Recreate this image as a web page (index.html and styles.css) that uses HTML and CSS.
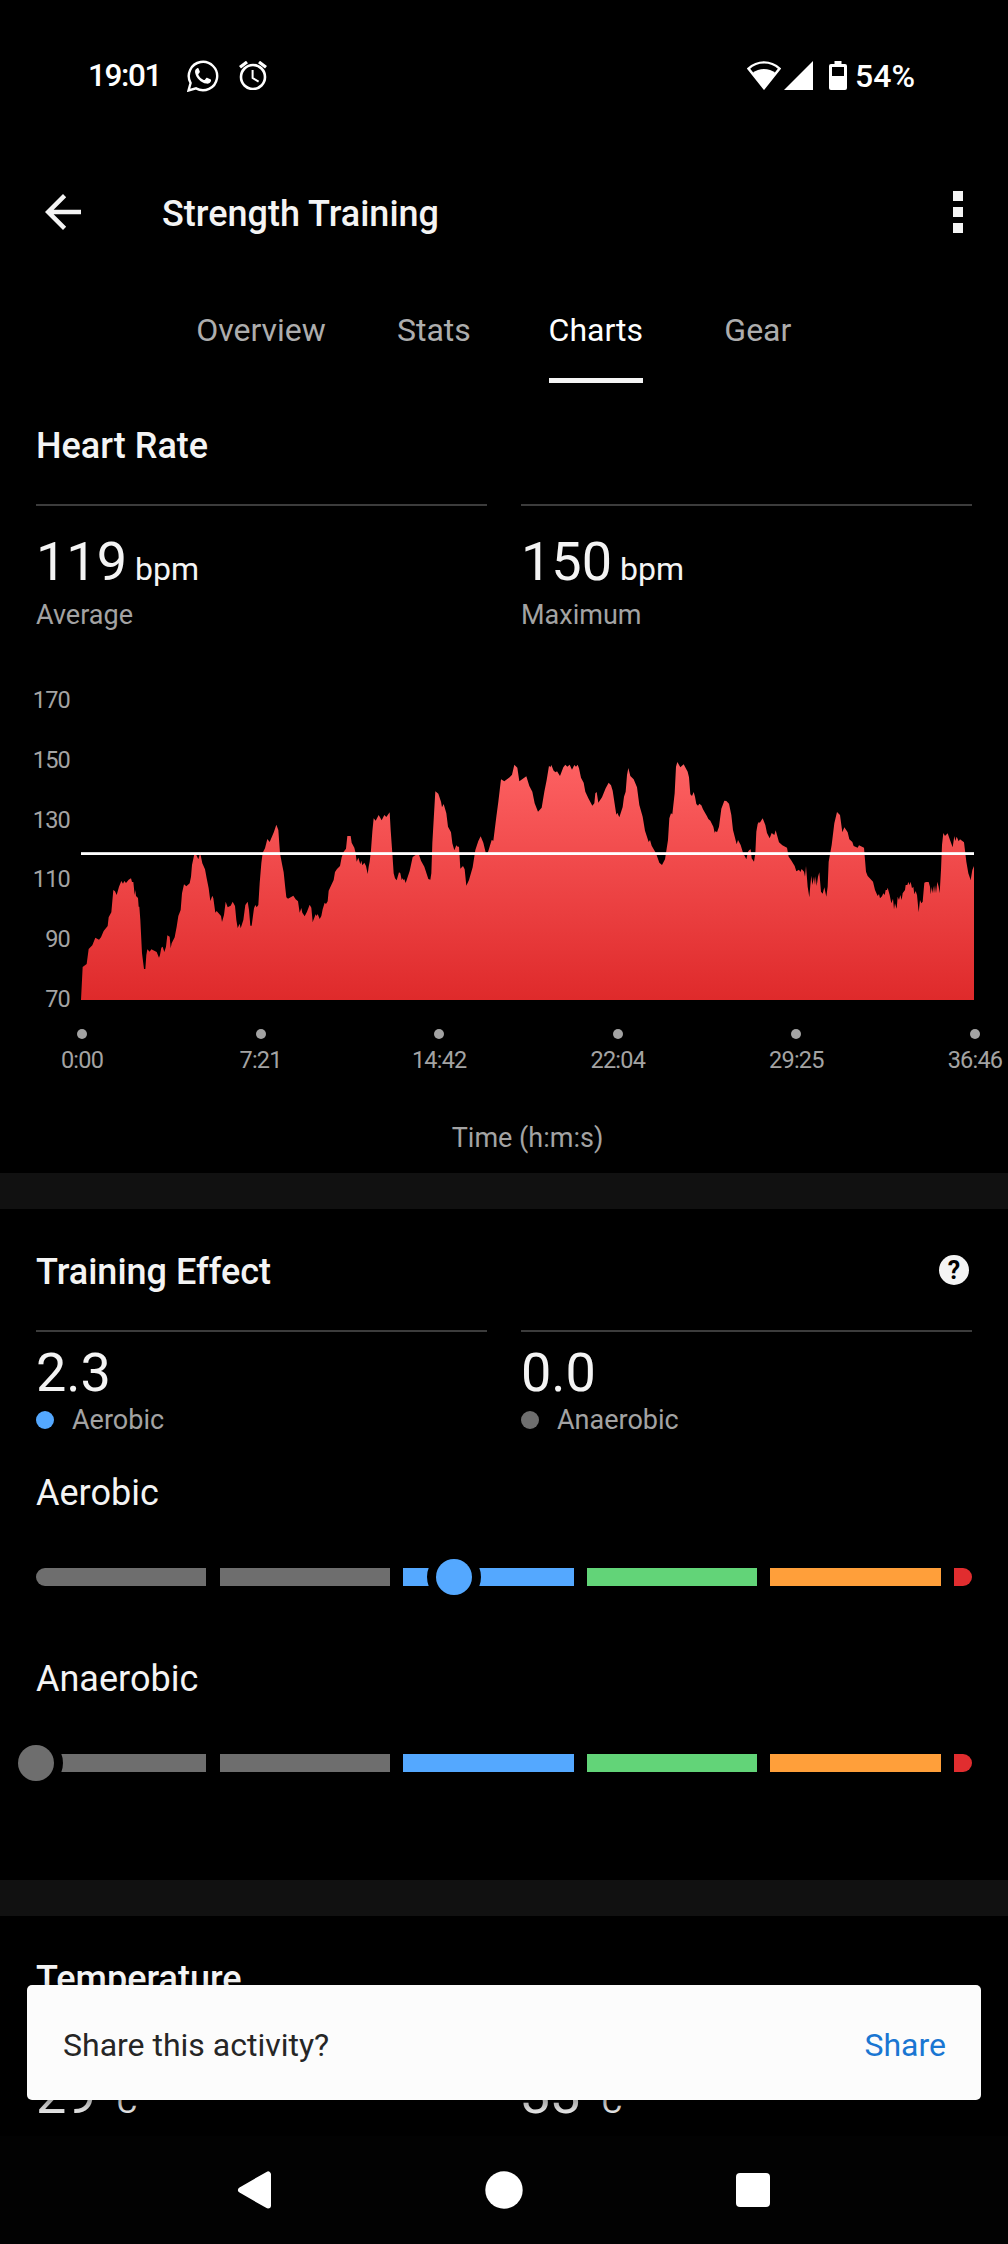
FILE: index.html
```html
<!DOCTYPE html>
<html lang="en">
<head>
  <meta charset="UTF-8">
  <title>Strength Training</title>
  <meta name="theme-color" content="#000000">
  <link rel="stylesheet" href="styles.css">
</head>
<body>

  <!-- status bar -->
  <div class="status">
    <span class="clock">19:01</span>
    <svg class="whatsapp" width="32" height="32" viewBox="0 0 32 32">
      <path d="M1.5 30.5 3.6 23A14.2 14.2 0 1 1 9 28.4z" fill="none" stroke="#fff" stroke-width="2.4"/>
      <path d="M10.2 8.2c-1.5.6-2.4 2.300-2.100 4.200.9 5.400 6 10.300 11.200 11.200 2.300.3 4.200-.8 4.700-2.600.2-.9 0-1.400-.6-1.700l-2.900-1.400c-.6-.3-1-.2-1.400.3l-1.200 1.500c-.3.400-.7.4-1.200.2-2.300-1-4.200-2.800-5.300-5-.2-.4-.1-.8.200-1.100l1-1.300c.3-.4.3-.8.1-1.200l-1.200-2.800c-.3-.5-.8-.5-1.300-.3z" fill="#fff"/>
    </svg>
    <svg class="alarm" width="28" height="29" viewBox="0 0 28 29" fill="none" stroke="#fff">
      <circle cx="14" cy="16" r="12" stroke-width="2.600"/>
      <path d="M1 6.300 8 1M27 6.300 20 1" stroke-width="3.200"/>
      <path d="M13.600 9v8l6 3.600" stroke-width="2"/>
    </svg>
    <span class="spacer"></span>
    <svg class="wifi" width="34" height="29" viewBox="0 0 34 29">
      <path d="M17 1.400C11 1.400 5.700 3.700 1.500 7.600L17 27.200 32.500 7.600C28.300 3.700 23 1.400 17 1.400z" fill="none" stroke="#fff" stroke-width="2.400"/>
      <path d="M5.500 12C12 6.700 22 6.700 28.500 12L17 28z" fill="#fff"/>
    </svg>
    <svg class="signal" width="29" height="29" viewBox="0 0 29 29"><path d="M29 0v29H0z" fill="#fff"/></svg>
    <svg class="battery" width="18" height="29" viewBox="0 0 18 29">
      <path d="M5.500 0h7v3H16a2 2 0 0 1 2 2v22a2 2 0 0 1-2 2H2a2 2 0 0 1-2-2V5a2 2 0 0 1 2-2h3.500zM3 6v9h12V6z" fill="#fff" fill-rule="evenodd"/>
    </svg>
    <span class="percent">54%</span>
  </div>

  <!-- toolbar -->
  <header class="toolbar">
    <svg width="54" height="54" viewBox="0 0 24 24"><path d="M20 11H7.830l5.590-5.590L12 4l-8 8 8 8 1.410-1.410L7.830 13H20z" fill="#f4f4f4"/></svg>
    <h1>Strength Training</h1>
    <div class="more"><i></i><i></i><i></i></div>
  </header>

  <nav class="tabs">
    <a class="tab"><span>Overview</span></a>
    <a class="tab"><span>Stats</span></a>
    <a class="tab active"><span>Charts</span></a>
    <a class="tab"><span>Gear</span></a>
  </nav>

  <!-- heart rate -->
  <section class="heart">
    <h2>Heart Rate</h2>
    <div class="stats">
      <div class="stat">
        <div class="value">119<small> bpm</small></div>
        <div class="label">Average</div>
      </div>
      <div class="stat">
        <div class="value">150<small> bpm</small></div>
        <div class="label">Maximum</div>
      </div>
    </div>

    <div class="chart">
      <div class="y-axis">
        <span>170</span><span>150</span><span>130</span><span>110</span><span>90</span><span>70</span>
      </div>
      <svg class="plot" viewBox="0 60 2679 900" preserveAspectRatio="none">
        <defs>
          <linearGradient id="hr" x1="0" y1="0" x2="0" y2="1">
            <stop offset="0" stop-color="#fd6162"/>
            <stop offset="1" stop-color="#df2a2b"/>
          </linearGradient>
        </defs>
        <path fill="url(#hr)" d="M0 960 L5 861 17 852 23 807 34 796 43 773 54 779 60 772 68 753 80 738 83 712 91 697 97 630 102 634 107 645 114 620 121 603 126 611 130 603 135 609 143 599 150 595 153 606 157 606 161 645 163 630 165 648 171 654 173 680 175 680 178 720 183 820 189 867 193 867 196 825 199 808 206 815 211 808 227 816 234 833 237 825 241 803 245 800 250 816 255 800 259 766 266 770 269 805 272 790 281 772 287 740 292 708 299 690 303 640 309 613 316 619 326 610 330 590 333 555 340 522 346 525 352 538 356 524 359 526 364 550 372 568 377 595 383 625 388 663 394 647 397 655 403 698 407 693 420 708 423 726 429 705 434 665 440 682 449 677 455 665 462 678 466 720 470 744 476 731 479 745 487 720 493 675 500 665 504 690 508 737 512 737 519 685 523 675 527 682 532 675 536 610 541 550 545 518 552 505 559 477 566 486 574 467 579 455 586 434 592 450 594 478 597 520 603 552 608 577 613 625 616 652 621 656 637 647 644 658 651 664 656 698 661 684 664 698 671 709 678 695 686 674 691 683 695 726 704 703 707 708 710 702 716 717 721 708 725 688 731 668 735 672 740 664 743 632 752 613 758 600 762 576 768 567 777 558 782 532 788 515 795 506 799 468 809 468
          812 488 820 503 824 520 827 545 832 533 838 553 841 542 844 556 850 548 855 558 860 582 863 560 866 545 870 510 874 455 878 415 884 422 893 405 902 421 910 405 916 411 926 397 929 450 934 520 938 580 942 595 947 601 954 577 958 580 962 600 965 595 968 601 970 597 974 609 986 573 995 531 1004 525 1014 524 1020 542 1030 560 1042 597 1048 599 1051 580 1054 490 1058 420 1063 334 1072 341 1080 365 1083 382 1088 372 1096 400 1101 440 1110 457 1114 490 1120 511 1126 496 1130 500 1134 500 1138 566 1146 558 1151 568 1156 617 1164 600 1175 562 1183 510 1192 483 1199 469 1207 488 1216 526 1222 513 1232 480 1237 482 1246 410 1252 365 1260 298 1270 304 1286 292 1293 284 1300 254 1309 263 1315 304 1336 289 1345 318 1354 335 1361 370 1371 395 1382 383 1390 335 1397 300 1404 257 1408 262 1411 255 1418 272 1424 277 1428 274 1437 288 1447 262 1453 254 1459 260 1466 254 1473 269 1480 255 1485 260 1490 254 1494 265 1500 293 1508 308 1513 335 1522 355 1534 377 1540 370 1543 340 1547 336 1552 368 1563 352 1574 325 1583 308 1590 316 1595 332 1606 404 1609 398 1615 412 1625 381 1629 350 1634 335 1638 285 1642 264 1648 288 1658 298 1668 322 1675 375 1685 410 1692 452 1703 486 1707 480 1712 497 1725 520 1735 548 1743 555 1752 538 1761 480 1765 415 1770 400 1774 403 1781 340 1785 260 1789 246
          1798 262 1808 253 1820 275 1824 292 1828 343 1833 348 1838 336 1842 350 1846 372 1851 377 1855 371 1861 376 1866 388 1878 409 1882 417 1888 422 1897 440 1901 458 1904 453 1908 457 1914 440 1921 386 1930 362 1936 363 1944 371 1951 405 1956 450 1967 493 1971 480 1979 495 1986 518 1996 538 2001 515 2005 510 2009 508 2012 535 2019 545 2023 520 2026 455 2030 432 2034 425 2036 429 2045 415 2053 435 2058 459 2066 475 2072 459 2080 465 2084 451 2094 487 2104 496 2118 503 2123 530 2130 540 2141 558 2146 574 2154 569 2158 576 2162 567 2169 575 2172 590 2175 558 2180 620 2185 652 2188 615 2191 587 2194 615 2199 590 2202 615 2204 588 2207 618 2211 590 2215 577 2220 635 2225 641 2230 622 2236 650 2240 620 2243 545 2252 495 2260 430 2268 396 2277 405 2284 457 2290 442 2300 457 2305 478 2314 486 2318 498 2330 503 2334 496 2349 503 2355 575 2360 588 2376 605 2382 630 2390 648 2394 642 2397 655 2403 649 2407 640 2411 645 2414 630 2418 630 2420 623 2426 645 2431 670 2436 656 2439 688 2442 670 2445 680 2447 686 2450 650 2454 660 2458 645 2462 660 2465 640 2472 630 2474 615 2479 615 2482 606 2486 615 2489 605 2493 625 2497 620 2500 643 2504 633 2508 645 2513 697 2517 660 2521 670 2525 665 2530 608 2535 606 2543 606 2547 620 2549 643 2552 620 2554 640 2557 618 2559 640 2562 615 2565 640 2569 605 2573 620 2576 640 2580 570 2583 495 2587 459 2592 468 2600 460 2607 480 2615 502 2620 468 2623 483 2627 470 2633 484 2637 478 2649 487 2653 520 2656 545 2662 580 2669 600 2674 570 2679 558 L2679 960z"/>
        <rect x="0" y="516.500" width="2679" height="8.500" fill="#fff"/>
      </svg>
    </div>
    <div class="x-axis">
      <span>0:00</span><span>7:21</span><span>14:42</span><span>22:04</span><span>29:25</span><span>36:46</span>
    </div>
    <div class="axis-title">Time (h:m:s)</div>
  </section>

  <!-- training effect -->
  <section class="effect">
    <div class="heading">
      <h2>Training Effect</h2>
      <span class="help">?</span>
    </div>
    <div class="stats">
      <div class="stat">
        <div class="value">2.3</div>
        <div class="label"><i class="dot blue"></i>Aerobic</div>
      </div>
      <div class="stat">
        <div class="value">0.0</div>
        <div class="label"><i class="dot gray"></i>Anaerobic</div>
      </div>
    </div>

    <h3>Aerobic</h3>
    <div class="scale">
      <i class="gray"></i><i class="gray"></i><i class="blue"></i><i class="green"></i><i class="orange"></i><i class="red"></i>
      <b class="knob blue" style="left: 44.7%"></b>
    </div>

    <h3>Anaerobic</h3>
    <div class="scale">
      <i class="gray"></i><i class="gray"></i><i class="blue"></i><i class="green"></i><i class="orange"></i><i class="red"></i>
      <b class="knob gray" style="left: 0%"></b>
    </div>
  </section>

  <!-- temperature -->
  <section class="temperature">
    <h2>Temperature</h2>
    <div class="stats">
      <div class="stat"><div class="value">29<small> °C</small></div></div>
      <div class="stat"><div class="value">33<small> °C</small></div></div>
    </div>
  </section>

  <div class="snackbar">
    <span>Share this activity?</span>
    <a>Share</a>
  </div>

  <!-- system navigation -->
  <div class="navbar">
    <svg width="36" height="38" viewBox="0 0 36 38"><path d="M4 19 31 3.500v31z" fill="#fff" stroke="#fff" stroke-width="6" stroke-linejoin="round"/></svg>
    <svg width="38" height="38" viewBox="0 0 38 38"><circle cx="19" cy="19" r="18.700" fill="#fff"/></svg>
    <svg width="36" height="38" viewBox="0 0 36 38"><rect x="1" y="2" width="34" height="34" rx="4" fill="#fff"/></svg>
  </div>

</body>
</html>
```

FILE: styles.css
```css
* {
  box-sizing: border-box;
}

body {
  margin: 0;
  height: 2244px;
  overflow: hidden;
  position: relative;
  background: #000;
  color: #f4f4f4;
  font-family: Roboto, sans-serif;
}

h1, h2, h3 {
  margin: 0;
  font-size: 36px;
  line-height: 42px;
  font-weight: 500;
}

h3 {
  font-weight: 400;
}

svg {
  display: block;
  flex: none;
}

/* status bar */
.status {
  display: flex;
  align-items: center;
  height: 151px;
  padding: 0 88px;
  color: #fff;
  font-size: 31.5px;
  font-weight: 500;
}

.clock {
  width: 99px;
  letter-spacing: -1.4px;
}

.alarm {
  margin-left: 20px;
}

.spacer {
  flex: 1;
}

.signal {
  margin-left: 3px;
}

.battery {
  margin-left: 16px;
}

.percent {
  width: 65px;
  margin-left: 8px;
  font-size: 32px;
}

/* toolbar */
.toolbar {
  display: flex;
  align-items: center;
  height: 122px;
  padding: 0 45px 0 36px;
}

.toolbar h1 {
  flex: 1;
  margin-left: 72px;
  padding-top: 3px;
}

.more {
  display: flex;
  flex-direction: column;
  gap: 6px;
}

.more i {
  width: 10px;
  height: 10px;
  background: #f4f4f4;
}

.tabs {
  display: flex;
  justify-content: center;
  height: 110px;
  padding-top: 36px;
}

.tab {
  display: flex;
  justify-content: center;
  min-width: 162px;
  padding: 0 27px;
  color: #adadad;
  font-size: 32px;
  line-height: 42px;
}

.tab.active {
  color: #fff;
}

.tab.active span {
  border-bottom: 5px solid #f4f4f4;
  padding-bottom: 27px;
}

/* sections */
section {
  padding: 42px 36px 0;
}

.heart {
  height: 790px;
}

.effect {
  height: 707px;
}

.effect, .temperature {
  border-top: 36px solid #111;
}

.stats {
  display: flex;
  gap: 34px;
  margin-top: 37px;
}

.stat {
  flex: 1;
  border-top: 2px solid #3c3c3c;
  padding-top: 24px;
}

.value {
  height: 63px;
  font-size: 54px;
  line-height: 63px;
}

.value small {
  font-size: 32px;
  line-height: 1;
}

.label {
  display: flex;
  align-items: center;
  margin-top: 6px;
  color: #a3a3a3;
  font-size: 27px;
  line-height: 32px;
}

.effect .stat {
  padding-top: 9px;
}

.effect .label {
  margin-top: 0;
}

/* heart rate chart */
.chart {
  display: flex;
  height: 325px;
  margin: 56px -2px 0 -36px;
}

.y-axis {
  display: flex;
  flex-direction: column;
  justify-content: space-between;
  width: 70px;
  margin-right: 11px;
  text-align: right;
  color: #a3a3a3;
  font-size: 23.5px;
  line-height: 26px;
  letter-spacing: -0.8px;
}

.plot {
  width: 893px;
  height: 300px;
  margin-top: 13px;
}

.x-axis {
  display: flex;
  justify-content: space-between;
  margin: 17px -33px 0 16px;
  color: #a3a3a3;
  font-size: 23.5px;
  line-height: 26px;
  letter-spacing: -0.8px;
}

.x-axis span {
  width: 60px;
  text-align: center;
}

.x-axis span::before {
  content: "";
  display: block;
  width: 10px;
  height: 10px;
  margin: 0 auto 8px;
  border-radius: 50%;
  background: #a3a3a3;
}

.axis-title {
  margin: 49px -2px 0 45px;
  text-align: center;
  color: #a3a3a3;
  font-size: 27px;
  line-height: 32px;
}

/* training effect */
.heading {
  display: flex;
  justify-content: space-between;
}

.help {
  width: 30px;
  height: 30px;
  margin: 4px 3px 0 0;
  border-radius: 50%;
  background: #f4f4f4;
  color: #000;
  font-size: 25px;
  font-weight: 700;
  line-height: 31px;
  text-align: center;
}

.blue { background: #54a8ff; }
.gray { background: #6e6e6e; }
.green { background: #62d478; }
.orange { background: #ff9f3a; }
.red { background: #e12d2f; }

.dot {
  width: 18px;
  height: 18px;
  margin-right: 18px;
  border-radius: 50%;
}

.effect h3 {
  margin-top: 36px;
}

.scale {
  position: relative;
  display: flex;
  gap: 13.2px;
  height: 18px;
  margin-top: 54px;
}

.effect .scale + h3 {
  margin-top: 72px;
}

.scale i {
  flex: 1;
}

.scale i:first-child {
  border-radius: 9px 0 0 9px;
}

.scale .red {
  flex: none;
  width: 18px;
  border-radius: 0 9px 9px 0;
}

/* knob sits over the bar with a black ring around it */
.knob {
  position: absolute;
  top: -9px;
  width: 36px;
  height: 36px;
  margin-left: -18px;
  border-radius: 50%;
  box-shadow: 0 0 0 9px #000;
}

/* share prompt */
.snackbar {
  position: absolute;
  left: 27px;
  right: 27px;
  top: 1985px;
  display: flex;
  justify-content: space-between;
  align-items: center;
  height: 115px;
  padding: 4px 35px 0 36px;
  border-radius: 5px;
  background: #fcfcfc;
  color: #262626;
  font-size: 32px;
  box-shadow: 0 6px 14px rgba(0,0,0,0.4);
}

.snackbar a {
  color: #1976d2;
}

.navbar {
  position: absolute;
  left: 0;
  right: 0;
  bottom: 0;
  display: flex;
  justify-content: space-between;
  align-items: center;
  height: 108px;
  padding: 0 237px 1px;
  background: #020202;
}
```
